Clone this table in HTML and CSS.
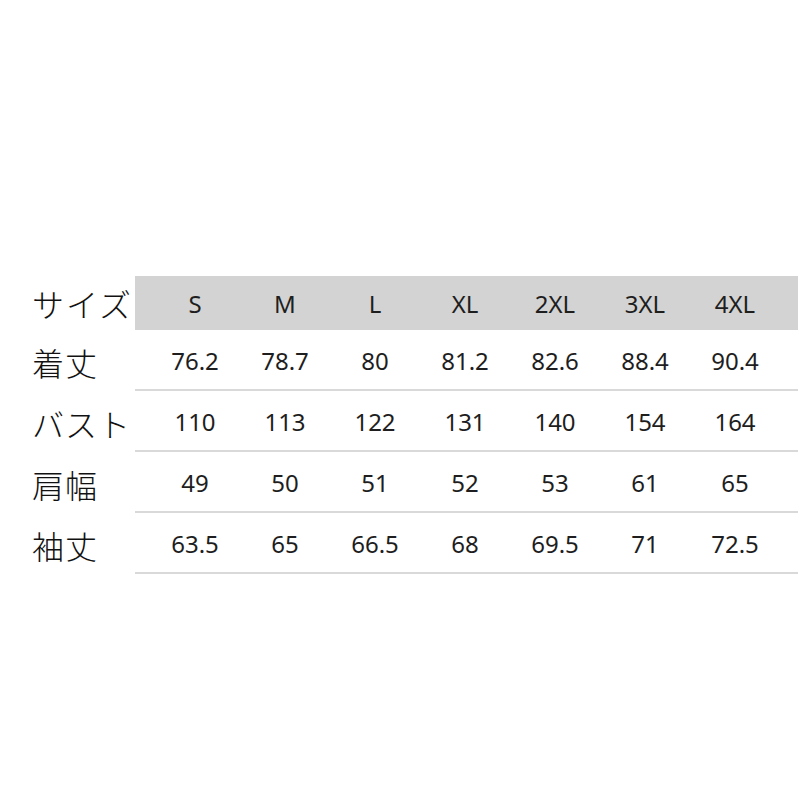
FILE: index.html
```html
<!DOCTYPE html>
<html lang="ja">
<head>
<meta charset="utf-8">
<link rel="stylesheet" href="styles.css">
</head>
<body>
<div class="chart">
  <div class="row head">
    <div class="label">サイズ</div>
    <div class="cells">
      <span>S</span><span>M</span><span>L</span><span>XL</span><span>2XL</span><span>3XL</span><span>4XL</span>
    </div>
  </div>
  <div class="row">
    <div class="label">着丈</div>
    <div class="cells">
      <span>76.2</span><span>78.7</span><span>80</span><span>81.2</span><span>82.6</span><span>88.4</span><span>90.4</span>
    </div>
  </div>
  <div class="row">
    <div class="label">バスト</div>
    <div class="cells">
      <span>110</span><span>113</span><span>122</span><span>131</span><span>140</span><span>154</span><span>164</span>
    </div>
  </div>
  <div class="row">
    <div class="label">肩幅</div>
    <div class="cells">
      <span>49</span><span>50</span><span>51</span><span>52</span><span>53</span><span>61</span><span>65</span>
    </div>
  </div>
  <div class="row">
    <div class="label">袖丈</div>
    <div class="cells">
      <span>63.5</span><span>65</span><span>66.5</span><span>68</span><span>69.5</span><span>71</span><span>72.5</span>
    </div>
  </div>
</div>
</body>
</html>
```

FILE: styles.css
```css
html, body {
  margin: 0;
  padding: 0;
  background: #ffffff;
}

.chart {
  padding-top: 276px;
  width: 798px;
}

.row {
  display: flex;
  height: 61px;
}

.row.head {
  height: 54px;
}

.label {
  width: 103px;
  padding-left: 32px;
  display: flex;
  align-items: center;
  font-family: "Noto Sans CJK JP", sans-serif;
  font-weight: 300;
  font-size: 32px;
  color: #111111;
  white-space: nowrap;
  letter-spacing: 1px;
  padding-top: 3px;
  box-sizing: content-box;
}

.row.head .label {
  padding-top: 0;
  letter-spacing: 2px;
}

.cells {
  flex: 1;
  display: flex;
  padding-left: 15px;
  border-bottom: 2px solid #d9d9d9;
  box-sizing: border-box;
}

.row.head .cells {
  background: #d3d3d3;
  border-bottom: none;
}

.cells span {
  width: 90px;
  display: flex;
  align-items: center;
  justify-content: center;
  font-family: "Noto Sans", "Open Sans", sans-serif;
  font-size: 24px;
  color: #1e1e1e;
  padding-top: 2px;
}

.row.head .cells span {
  padding-top: 0;
}
```
